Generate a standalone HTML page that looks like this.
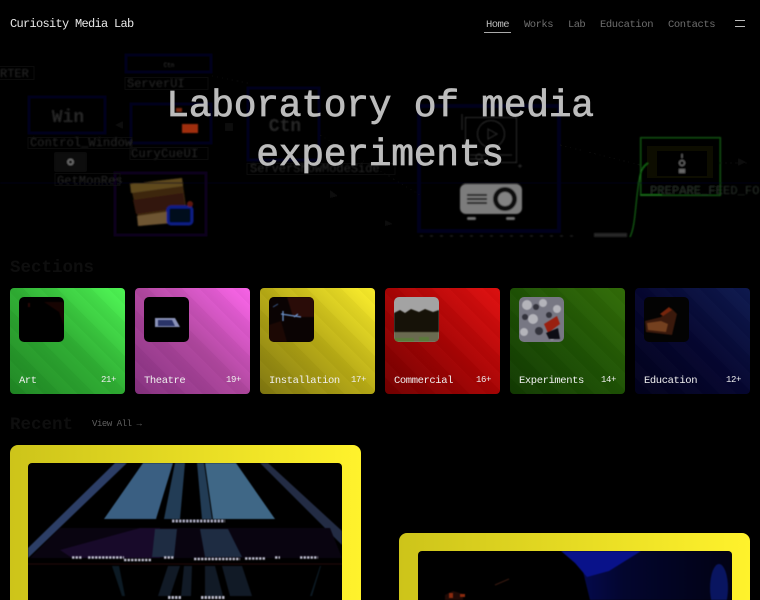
<!DOCTYPE html>
<html lang="en"><head><meta charset="utf-8"><title>Curiosity Media Lab</title>
<style>
*{box-sizing:border-box}
html,body{margin:0;padding:0;width:760px;height:600px;overflow:hidden;background:#000}
body{position:relative;font-family:"Liberation Mono",monospace;color:#fff}
.a{position:absolute;white-space:nowrap}
svg{display:block}
.logo{left:10px;top:16px;font-size:12px;line-height:16px;letter-spacing:-.7px;color:#e8e8e8}
.nav{top:18px;font-size:10.5px;line-height:14px;color:#6e6e6e}
h1{position:absolute;margin:0;left:0;top:83px;width:760px;text-align:center;font-size:38px;line-height:48.5px;letter-spacing:-.3px;font-weight:400;color:#bcbcbc;-webkit-text-stroke:.7px #bcbcbc}
h2{position:absolute;margin:0;font-size:17.5px;line-height:22px;font-weight:700;color:#0e0e0e}
.card{position:absolute;top:288px;width:115px;height:106px;border-radius:4px;overflow:hidden}
.card:after{content:"";position:absolute;inset:0;background:repeating-linear-gradient(45deg,rgba(0,0,0,.03) 0 12px,rgba(255,255,255,.012) 12px 24px)}
.th{position:absolute;left:9px;top:9px;width:45px;height:45px;border-radius:5px;overflow:hidden;background:#000;z-index:1}
.th svg{filter:blur(.6px)}
.lb{position:absolute;left:9px;top:86px;font-size:10.5px;line-height:14px;letter-spacing:-.4px;color:#f0f0f0;z-index:1;white-space:nowrap}
.ct{position:absolute;right:9px;top:86px;font-size:9px;line-height:12px;letter-spacing:-.4px;color:#f0f0f0;z-index:1}
.big{position:absolute;width:351px;height:155px;border-radius:8px 8px 0 0;background:linear-gradient(90deg,#cdc41a,#fff22c)}
.in{position:absolute;left:18px;top:18px;width:314px;height:137px;border-radius:4px 4px 0 0;background:#000;overflow:hidden}
.in svg{filter:blur(.5px)}
</style></head><body>

<svg class="a" style="left:0;top:0" width="760" height="240" viewBox="0 0 760 240" font-family="Liberation Mono,monospace">
<defs><filter id="b"><feGaussianBlur stdDeviation=".7"/></filter></defs>
<g filter="url(#b)">
<g fill="none" stroke="#05051c" stroke-width="3">
<rect x="126" y="55" width="85" height="17"/><rect x="29" y="97" width="76" height="36"/><rect x="131" y="104" width="80" height="39"/><rect x="248" y="88" width="71" height="72"/></g>
<rect x="115" y="173" width="91" height="62" fill="none" stroke="#0b061a" stroke-width="3"/>
<rect x="419" y="106" width="140" height="125" fill="none" stroke="#04041a" stroke-width="4"/>
<g fill="none" stroke="#0e0e0e" stroke-width="1">
<rect x="-2" y="66.500" width="36" height="13"/><rect x="125" y="77.500" width="83" height="12"/><rect x="28" y="137.500" width="104" height="11"/><rect x="130" y="147.500" width="78" height="12"/><rect x="55" y="173.500" width="65" height="12"/><rect x="247" y="163.500" width="148" height="11"/></g>
<g fill="#272727" font-size="12"><text x="0" y="77">RTER</text><text x="127" y="87">ServerUI</text><text x="30" y="146" letter-spacing=".1">Control_Window</text><text x="131" y="157" letter-spacing=".3">CuryCueUI</text><text x="57" y="184" letter-spacing=".1">GetMonRes</text><text x="250" y="172">ServerShowModeSide</text></g>
<text x="169" y="67" font-size="6" fill="#3c3c3c" text-anchor="middle">Ctn</text>
<text x="68" y="122" font-size="18" font-weight="700" fill="#262626" text-anchor="middle">Win</text>
<text x="285" y="131" font-size="18" font-weight="700" fill="#262626" text-anchor="middle">Ctn</text>
<rect x="182" y="124" width="16" height="9" fill="#a02e0f"/><rect x="176" y="108" width="6" height="4" fill="#7a2610"/>
<path d="M115 125l8-4v8zM225 123h8v8h-8z" fill="#111"/>
<rect x="55" y="153" width="31" height="18" fill="#080808" stroke="#181818"/><circle cx="70.500" cy="162" r="2.500" fill="none" stroke="#777" stroke-width="1.500"/>
<path d="M130 184l52-6 6 42-48 6z" fill="#3e280f"/><path d="M130 184l52-6 1 8-52 7z" fill="#5e4a1e"/><path d="M133 200l50-7 2 14-49 7z" fill="#321208"/><path d="M137 216l35-5 1 12-35 3z" fill="#6e5430"/>
<rect x="168" y="207" width="24" height="17" rx="3" fill="#06101a" stroke="#091e85" stroke-width="3"/><circle cx="190" cy="204" r="3" fill="#5e160a"/>
<g fill="none" stroke="#2e2e2e" stroke-width="1"><rect x="465.500" y="117.500" width="51" height="45"/><circle cx="491" cy="134" r="13.500"/><path d="M488 129l9 5-9 5z"/><path d="M470 155h42M470 159h14M462 114v16M518 166h4M520 164v4"/><circle cx="479" cy="157" r="3"/></g>
<rect x="460" y="184" width="62" height="30" rx="6" fill="#7c7c7c"/>
<circle cx="505" cy="199" r="12" fill="#0a0a0a"/><circle cx="505" cy="199" r="7" fill="#828282"/>
<path d="M467 195h20M467 199h20M467 203h20" stroke="#0c0c0c" stroke-width="1.800"/>
<rect x="467" y="217" width="9" height="3" rx="1.500" fill="#707070"/><rect x="506" y="217" width="9" height="3" rx="1.500" fill="#707070"/>
<rect x="640.500" y="137.500" width="80" height="58" fill="#020302" stroke="#155c15" stroke-width="1"/>
<rect x="647" y="146" width="66" height="32" fill="#100d03"/><rect x="657" y="151" width="50" height="25" fill="#030303"/>
<circle cx="682" cy="163" r="2.500" fill="none" stroke="#777"/><path d="M682 154v4" stroke="#666"/><rect x="679" y="169" width="6" height="4" fill="#666"/>
<text x="650" y="194" font-size="12" fill="#262e28" letter-spacing=".1">PREPARE_FEED_FO</text>
<path d="M630 237c6-12 5-36 10-62 1-6 5-10 8-12" fill="none" stroke="#1b7a1b" stroke-width="1"/>
<path d="M640 195h22" stroke="#1b7a1b"/>
<path d="M420 236H580" stroke="#2c2c2c" stroke-dasharray="3 7"/><rect x="594" y="233" width="33" height="4" fill="#282828"/>
<path d="M0 183H760" stroke="#050514"/>
<path d="M212 76l40 8M320 135l100 60M560 145l80 20M720 163h30" stroke="#0c0c0c" stroke-dasharray="2 3" fill="none"/>
<path d="M738 158l8 4-8 4zM330 190l8 6-8 2zM385 220l8 4-8 2z" fill="#101010"/>
</g></svg>

<div class="a logo">Curiosity Media Lab</div>
<div class="a nav" style="left:486px;color:#bbb;letter-spacing:-.55px">Home</div>
<div class="a" style="left:484px;top:32px;width:27px;height:1px;background:#aaa"></div>
<div class="a nav" style="left:524px;letter-spacing:-.5px">Works</div>
<div class="a nav" style="left:568px;letter-spacing:-.6px">Lab</div>
<div class="a nav" style="left:600px;letter-spacing:-.4px">Education</div>
<div class="a nav" style="left:668px;letter-spacing:-.4px">Contacts</div>
<div class="a" style="left:735px;top:20px;width:10px;height:1px;background:#bbb"></div>
<div class="a" style="left:735px;top:26px;width:10px;height:1px;background:#bbb"></div>

<h1>Laboratory of media<br>experiments</h1>

<h2 style="left:10px;top:257px">Sections</h2>

<div class="card" style="left:10px;background:linear-gradient(to top right,#1f8623,#2fae33 50%,#50fb56)">
<div class="th"><svg width="45" height="45"><path d="M25 5l15 10 5 14V5z" fill="#170402"/><rect x="9" y="6" width="2" height="4" fill="#2a0806"/></svg></div><div class="lb">Art</div><div class="ct">21+</div></div>
<div class="card" style="left:135px;background:linear-gradient(to top right,#85317f,#b0479f 50%,#ff66ee)">
<div class="th"><svg width="45" height="45"><path d="M11 21h20l5 9H11z" fill="#8a92b8"/><path d="M14 23h14l3 6H14z" fill="#2a3468"/></svg></div><div class="lb">Theatre</div><div class="ct">19+</div></div>
<div class="card" style="left:260px;background:linear-gradient(to top right,#7f7610,#b8ab15 50%,#fff22c)">
<div class="th"><svg width="45" height="45"><rect width="45" height="45" fill="#0a0303"/><path d="M18 0h27v20H24z" fill="#2a0c08"/><path d="M0 28l12-4 6 21H0z" fill="#1c0804"/><path d="M12 17l20 3M14 14v10M25 20l4-3" stroke="#6a90c8" stroke-width="1.300"/><path d="M4 10l5-3" stroke="#3a5a8a"/></svg></div><div class="lb">Installation</div><div class="ct">17+</div></div>
<div class="card" style="left:385px;background:linear-gradient(to top right,#730000,#a80404 50%,#e31010)">
<div class="th" style="background:#a3a3a3"><svg width="45" height="45"><path d="M0 16l6-3 5 3 6-4 8 3 6-3 8 3 6-2v22H0z" fill="#161208"/><rect y="35" width="45" height="10" fill="#6a6a50"/><path d="M0 41h20v4H0zM25 40h10v5H25z" fill="#5a7a3a"/></svg></div><div class="lb">Commercial</div><div class="ct">16+</div></div>
<div class="card" style="left:510px;background:linear-gradient(to top right,#123a02,#1e5204 50%,#336e08)">
<div class="th" style="background:#777783"><svg width="45" height="45"><g fill="#b4b4ba"><circle cx="8" cy="8" r="5"/><circle cx="24" cy="6" r="4"/><circle cx="38" cy="12" r="4"/><circle cx="14" cy="22" r="5"/><circle cx="5" cy="35" r="4"/><circle cx="33" cy="40" r="3"/></g><g fill="#33333c"><circle cx="17" cy="10" r="3"/><circle cx="30" cy="18" r="3"/><circle cx="6" cy="20" r="3"/><circle cx="20" cy="34" r="4"/></g><path d="M25 27l13-8 3 8-12 9z" fill="#9a2010"/><path d="M27 36l12-5 2 11H30z" fill="#0d0d14"/></svg></div><div class="lb">Experiments</div><div class="ct">14+</div></div>
<div class="card" style="left:635px;background:linear-gradient(to top right,#02021c,#050630 50%,#0e1a50)">
<div class="th" style="background:#030303"><svg width="45" height="45"><path d="M1 24l16-4 10-9 6 6-5 21-26-3z" fill="#3a190c"/><path d="M3 26l14-2 7 3-2 8-18-2z" fill="#74401f"/><path d="M16 17l9-7 3 3-9 6z" fill="#76250c"/></svg></div><div class="lb">Education</div><div class="ct">12+</div></div>

<h2 style="left:10px;top:414px">Recent</h2>
<div class="a" style="left:92px;top:418px;font-size:9px;line-height:12px;color:#606060;letter-spacing:-.45px">View All →</div>

<div class="big" style="left:10px;top:445px"><div class="in"><svg width="314" height="137" viewBox="28 463 314 137">
<path d="M115 463h12L28 558v-10z" fill="#2c3e66"/>
<path d="M260 463h8l74 68v14z" fill="#232c44"/>
<path d="M143 463h30l-17 56h-52z" fill="#3a5f82"/>
<path d="M205 463h31l39 56h-62z" fill="#3f6786"/>
<path d="M175 463h10l-5 56h-16z" fill="#223c55"/>
<path d="M197 463h7l8 56h-10z" fill="#223c55"/>
<path d="M60 528h270l12 30H30z" fill="#090410"/>
<path d="M60 550l80-22h20v30H72z" fill="#180a2a"/>
<path d="M155 529h22l-3 28h-22zM200 529h28l14 28h-37z" fill="#1e2c42"/>
<path d="M172 521h53" stroke="#a4a4b8" stroke-width="3" stroke-dasharray="2.500 1"/>
<g stroke="#b8b8c8" stroke-width="2.500" stroke-dasharray="2.500 1" fill="none"><path d="M72 557.500h10M88 557.500h36M124 560h28M164 557.500h10M194 559h46M245 558.500h20M275 557.500h5M300 557.500h18"/></g>
<path d="M28 564H342" stroke="#220a0a"/>
<path d="M168 566h12l-10 30h-12zM184 566h8l-1 30h-10zM205 566h10l8 30h-18zM222 566h20l10 30h-22z" fill="#111a26"/>
<path d="M112 566l10 30h3l-6-30zM320 566l-10 30h2l9-30z" fill="#0c1a24"/>
<path d="M168 597.500h14M201 597.500h24" stroke="#b8b8c8" stroke-width="3" stroke-dasharray="2.500 1"/>
</svg></div></div>

<div class="big" style="left:399.300px;top:532.500px;height:67.500px"><div class="in" style="left:18.500px;top:18.500px;height:49px"><svg width="314" height="49" viewBox="418 551 314 49">
<defs><linearGradient id="g" x1="0" x2="1"><stop offset="0" stop-color="#050a50"/><stop offset=".3" stop-color="#03062e"/><stop offset="1" stop-color="#020214"/></linearGradient></defs>
<path d="M578 551h154v49H590z" fill="url(#g)"/>
<path d="M561 551h80l-32 20-22 6-12-14z" fill="#09128a"/>
<ellipse cx="719" cy="588" rx="9" ry="24" fill="#091560"/>
<path d="M445 595l8-4 10 3v6h-18z" fill="#200a06"/><rect x="449" y="593" width="4" height="5" fill="#8a2a0e"/><rect x="460" y="594" width="5" height="3" fill="#8a2a0e"/>
<path d="M495 585l14-6" stroke="#3a1a10"/>
</svg></div></div>
</body></html>
